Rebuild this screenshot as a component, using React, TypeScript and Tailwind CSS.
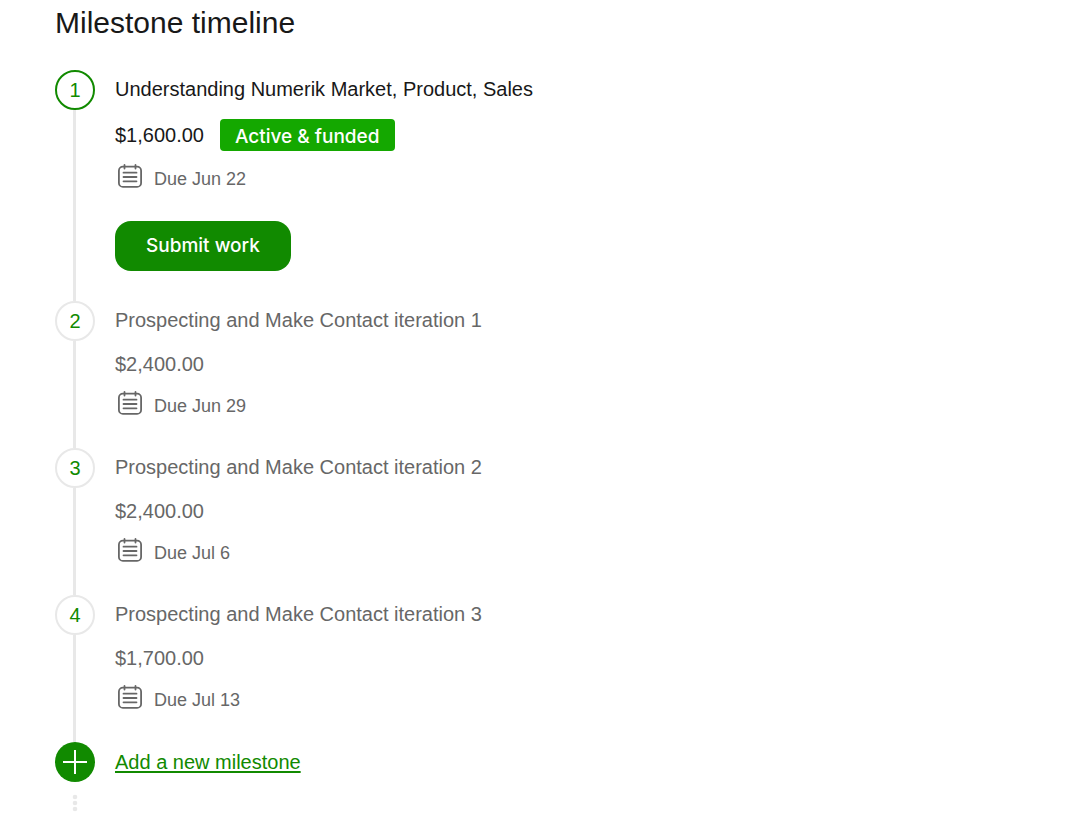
type Milestone = {
  title: string;
  amount: string;
  due: string;
  active?: boolean;
};

const milestones: Milestone[] = [
  {
    title: "Understanding Numerik Market, Product, Sales",
    amount: "$1,600.00",
    due: "Due Jun 22",
    active: true,
  },
  { title: "Prospecting and Make Contact iteration 1", amount: "$2,400.00", due: "Due Jun 29" },
  { title: "Prospecting and Make Contact iteration 2", amount: "$2,400.00", due: "Due Jul 6" },
  { title: "Prospecting and Make Contact iteration 3", amount: "$1,700.00", due: "Due Jul 13" },
];

function CalendarIcon() {
  return (
    <svg
      className="size-6 shrink-0"
      viewBox="0 0 24 24"
      fill="none"
      stroke="#676767"
      strokeWidth="1.8"
      strokeLinecap="round"
      aria-hidden="true"
    >
      <rect x="0.9" y="2.700" width="22.200" height="20.200" rx="4" />
      <path d="M6.500 0.900v3.600M17.500 0.900v3.600" />
      <path d="M5.500 8.700h13M5.500 13h13M5.500 17.300h13" />
    </svg>
  );
}

function MilestoneItem({ milestone, index }: { milestone: Milestone; index: number }) {
  const { title, amount, due, active } = milestone;
  return (
    <li className="flex gap-5">
      <div className="flex w-10 shrink-0 flex-col items-center">
        <span
          className={`flex size-10 items-center justify-center rounded-full border-2 text-xl text-[#118a00] ${
            active ? "border-[#118a00]" : "border-[#e8e8e8]"
          }`}
        >
          {index + 1}
        </span>
        <span className="mr-[2px] w-[3px] flex-1 bg-[#e8e8e8]" />
      </div>
      <div className={`min-w-0 flex-1 pb-[30px] ${active ? "text-[#181818]" : "text-[#676767]"}`}>
        <h3 className="pb-[2px] text-xl leading-[38px]">{title}</h3>
        <div className="mt-[9px] flex items-center gap-4 text-xl leading-7">
          <span>{amount}</span>
          {active && (
            <span className="rounded bg-[#14a800] px-[15px] pt-1 font-['Inter',sans-serif] text-[19px] font-medium leading-7 text-white">
              Active &amp; funded
            </span>
          )}
        </div>
        <div className="mt-[13px] flex gap-3 pl-[3px] text-[#676767]">
          <CalendarIcon />
          <span className="pt-[3px] text-lg leading-6">{due}</span>
        </div>
        {active && (
          <button
            type="button"
            className="mt-[30px] h-[50px] rounded-2xl bg-[#118a00] px-[31px] font-['Inter',sans-serif] text-[19px] font-medium text-white"
          >
            Submit work
          </button>
        )}
      </div>
    </li>
  );
}

export default function App() {
  return (
    <main className="min-h-screen bg-white px-[55px] pt-[3px] font-['Liberation_Sans',Arial,sans-serif]">
      <h2 className="text-[30px] leading-10 text-[#181818]">Milestone timeline</h2>
      <ol className="mt-[27px]">
        {milestones.map((milestone, index) => (
          <MilestoneItem key={milestone.title} milestone={milestone} index={index} />
        ))}
      </ol>
      <div className="flex gap-5">
        <div className="flex w-10 shrink-0 flex-col items-center">
          <span className="flex size-10 items-center justify-center rounded-full bg-[#118a00]">
            <svg className="size-6" viewBox="0 0 24 24" stroke="#fff" strokeWidth="2" aria-hidden="true">
              <path d="M12 0v24M0 12h24" />
            </svg>
          </span>
          <svg className="mt-3 h-[18px] w-[6px]" viewBox="0 0 6 18" fill="#e8e8e8" aria-hidden="true">
            <circle cx="3" cy="3" r="2.3" />
            <circle cx="3" cy="9" r="2.3" />
            <circle cx="3" cy="15" r="2.3" />
          </svg>
        </div>
        <a
          href="#add-milestone"
          className="self-start text-xl leading-10 text-[#118a00] underline decoration-2 underline-offset-2"
        >
          Add a new milestone
        </a>
      </div>
    </main>
  );
}
